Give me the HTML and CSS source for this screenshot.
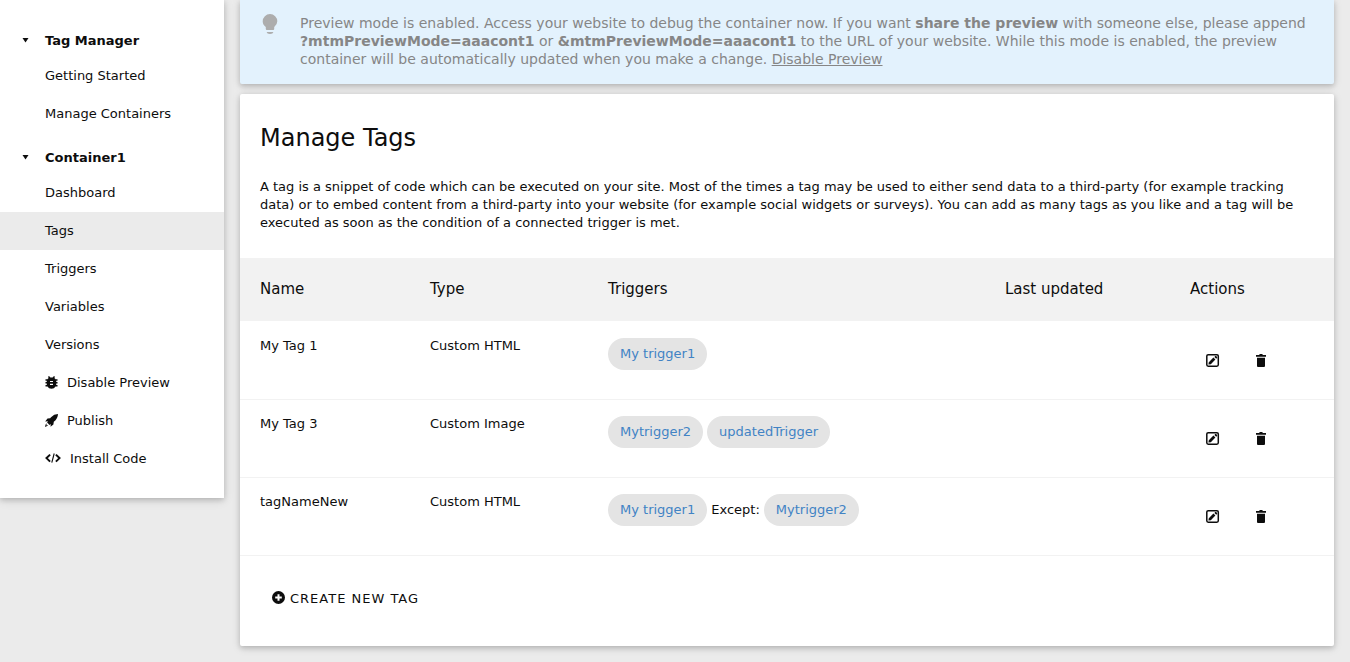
FILE: index.html
```
<!DOCTYPE html>
<html lang="en">
<head>
<meta charset="utf-8">
<title>Manage Tags</title>
<link rel="stylesheet" href="styles.css">
</head>
<body>
<svg class="sprite" aria-hidden="true">
  <symbol id="edit" viewBox="0 0 14 14">
    <rect x=".8" y="1.700" width="11.500" height="11.500" rx="1.400" fill="none" stroke="currentColor" stroke-width="1.500"/>
    <path d="M2.400 11.600l.4-2.400 4.600-4.600 2 2-4.600 4.600zM8.400 3.900l.8-.8q.5-.4 1 0l.8.8q.4.500 0 1l-.8.8z"/>
  </symbol>
  <symbol id="trash" viewBox="0 0 12 14">
    <path d="M0 2h3.200L3.700 1h2.600l.5 1H10v1.700H0zM1 4.700h8V13q0 1-1 1H2q-1 0-1-1z"/>
  </symbol>
</svg>
<div class="page">
  <nav class="sidebar" aria-label="Tag Manager">
    <button class="group" type="button"><svg class="arrow" viewBox="0 0 7 6" aria-hidden="true"><path d="M.5 0h6l-3 4.500z"/></svg>Tag Manager</button>
    <ul class="menu">
      <li><a class="item" href="#">Getting Started</a></li>
      <li><a class="item" href="#">Manage Containers</a></li>
    </ul>
    <button class="group" type="button"><svg class="arrow" viewBox="0 0 7 6" aria-hidden="true"><path d="M.5 0h6l-3 4.500z"/></svg>Container1</button>
    <ul class="menu">
      <li><a class="item" href="#">Dashboard</a></li>
      <li><a class="item active" href="#" aria-current="page">Tags</a></li>
      <li><a class="item" href="#">Triggers</a></li>
      <li><a class="item" href="#">Variables</a></li>
      <li><a class="item" href="#">Versions</a></li>
      <li><a class="item" href="#"><svg class="icon" viewBox="0 0 13 14" aria-hidden="true"><path fill-rule="evenodd" d="M2.900 1.100L4 .1l1.400 1.300h2.200L9 .1l1.100 1-.9.900q.9.500 1.300 1.200h2v1.500h-1.300V6h1.300v1.600h-1.300v1.300h1.300v1.500h-2Q9.300 12.700 6.500 12.700T2.500 10.400h-2V8.900h1.300V7.600H.5V6h1.300V4.700H.5V3.200h2q.4-.7 1.300-1.200zM5 4.900v1.200h3V4.900zM5 7.700v1.200h3V7.700z"/></svg>Disable Preview</a></li>
      <li><a class="item" href="#"><svg class="icon" viewBox="0 0 13 14" aria-hidden="true"><path d="M13 0Q9 .1 6 3.300L5.200 4.300 2.500 4.600.2 7.600l2.800-.4-.9 1.200 2.500 2.500 1.200-.8-.3 2.600 2.900-2.200.4-2.700Q12.800 4.900 13 0zM1.600 9.200Q.4 10.100 0 12.900q2.600-.5 3.400-2.100l-1.900.8z"/></svg>Publish</a></li>
      <li><a class="item" href="#"><svg class="icon wide" viewBox="0 0 16 14" aria-hidden="true"><path d="M5.100 2.600L1.500 6.100l3.600 3.500M10.900 2.600l3.600 3.500-3.600 3.500" fill="none" stroke="currentColor" stroke-width="2"/><path d="M9.200 1.500L6.800 10.700" fill="none" stroke="currentColor" stroke-width="1.100"/></svg>Install Code</a></li>
    </ul>
  </nav>
  <main class="content">
    <div class="notice" role="status">
      <svg class="bulb" viewBox="0 0 16 22" aria-hidden="true"><path d="M8 0a7.300 7.300 0 0 1 7.300 7.300q0 3.500-3.100 5.700v2q0 1-1 1H4.800q-1 0-1-1v-2Q.7 10.800.7 7.300A7.300 7.300 0 0 1 8 0zM4.600 18h6.800l-1 1.600Q9.700 20 8 20t-2.400-.4z"/></svg>
      <p class="notice-text">Preview mode is enabled. Access your website to debug the container now. If you want <strong>share the preview</strong> with someone else, please append <strong>?mtmPreviewMode=aaacont1</strong> or <strong>&amp;mtmPreviewMode=aaacont1</strong> to the URL of your website. While this mode is enabled, the preview container will be automatically updated when you make a change. <a class="notice-link" href="#">Disable Preview</a></p>
    </div>
    <section class="card">
      <h2 class="title">Manage Tags</h2>
      <p class="intro">A tag is a snippet of code which can be executed on your site. Most of the times a tag may be used to either send data to a third-party (for example tracking data) or to embed content from a third-party into your website (for example social widgets or surveys). You can add as many tags as you like and a tag will be executed as soon as the condition of a connected trigger is met.</p>
      <table class="tags">
        <thead>
          <tr><th class="col-name">Name</th><th class="col-type">Type</th><th>Triggers</th><th class="col-updated">Last updated</th><th class="col-actions">Actions</th></tr>
        </thead>
        <tbody>
          <tr>
            <td>My Tag 1</td><td>Custom HTML</td>
            <td><div class="chips"><a class="chip" href="#">My trigger1</a></div></td><td></td>
            <td><div class="actions"><button class="action" type="button" aria-label="Edit My Tag 1"><svg class="edit"><use href="#edit"/></svg></button><button class="action" type="button" aria-label="Delete My Tag 1"><svg class="trash"><use href="#trash"/></svg></button></div></td>
          </tr>
          <tr>
            <td>My Tag 3</td><td>Custom Image</td>
            <td><div class="chips"><a class="chip" href="#">Mytrigger2</a><a class="chip" href="#">updatedTrigger</a></div></td><td></td>
            <td><div class="actions"><button class="action" type="button" aria-label="Edit My Tag 3"><svg class="edit"><use href="#edit"/></svg></button><button class="action" type="button" aria-label="Delete My Tag 3"><svg class="trash"><use href="#trash"/></svg></button></div></td>
          </tr>
          <tr>
            <td>tagNameNew</td><td>Custom HTML</td>
            <td><div class="chips"><a class="chip" href="#">My trigger1</a><span>Except:</span><a class="chip" href="#">Mytrigger2</a></div></td><td></td>
            <td><div class="actions"><button class="action" type="button" aria-label="Edit tagNameNew"><svg class="edit"><use href="#edit"/></svg></button><button class="action" type="button" aria-label="Delete tagNameNew"><svg class="trash"><use href="#trash"/></svg></button></div></td>
          </tr>
        </tbody>
      </table>
      <button class="create" type="button"><svg class="plus" viewBox="0 0 14 16" aria-hidden="true"><path fill-rule="evenodd" d="M6.500 0a6.500 6.500 0 1 1 0 13A6.500 6.500 0 0 1 6.500 0zM5.500 3.200v2.300H3.200v2h2.300v2.300h2V7.500h2.300v-2H7.500V3.200z"/></svg>Create new tag</button>
    </section>
  </main>
</div>
</body>
</html>
```
FILE: styles.css
```
* { box-sizing: border-box; }
body {
  margin: 0;
  background: #ebebeb;
  color: #0d0d0d;
  font: 13px/18px "DejaVu Sans", sans-serif;
}
button { font: inherit; color: inherit; background: none; border: 0; padding: 0; cursor: pointer; }
a { text-decoration: none; color: inherit; }
svg { fill: currentColor; display: block; flex: none; }
.sprite { display: none; }

.page { display: flex; align-items: flex-start; gap: 16px; padding-right: 16px; }

.sidebar, .notice, .card {
  box-shadow: 0 2px 5px rgba(0, 0, 0, .16), 0 2px 10px rgba(0, 0, 0, .12);
}
.sidebar { flex: none; width: 224px; padding: 16px 0 20px; background: #fff; }
.group {
  display: flex;
  align-items: center;
  width: 100%;
  padding: 16px 0 7px 22px;
  gap: 16px;
  font-weight: bold;
}
.arrow { width: 7px; height: 6px; }
.menu { list-style: none; margin: 0; padding: 0; }
.item { display: flex; align-items: center; gap: 9px; padding: 10px 20px 10px 45px; }
.item.active { background: #ebebeb; }
.icon { width: 13px; height: 14px; }
.icon.wide { width: 16px; }

.content { flex: 1; min-width: 0; padding-bottom: 16px; }
.notice {
  display: flex;
  gap: 22px;
  padding: 14px 20px 16px 22px;
  background: #e3f2fd;
  color: #868686;
  border-radius: 0 0 2px 2px;
}
.bulb { width: 16px; height: 22px; color: #adadad; }
.notice-text { margin: 0; font-size: 14px; }
.notice-link { text-decoration: underline; }

.card { margin-top: 10px; padding-bottom: 30px; background: #fff; border-radius: 2px; }
.title { margin: 0; padding: 28px 20px 0; font-size: 24px; line-height: 32px; font-weight: normal; }
.intro { margin: 0; padding: 24px 20px 26px; }

.tags { width: 100%; table-layout: fixed; border-collapse: separate; border-spacing: 0; }
.tags th {
  height: 63px;
  padding: 0 0 2px 20px;
  background: #f2f2f2;
  font-size: 15px;
  font-weight: normal;
  text-align: left;
}
.tags td {
  height: 78px;
  padding: 15px 0 0 20px;
  vertical-align: top;
  border-bottom: 1px solid #f2f2f2;
}
.tags tr:first-child td { height: 79px; padding-top: 16px; }
.col-name { width: 170px; }
.col-type { width: 178px; }
.col-updated { width: 185px; }
.col-actions { width: 164px; }
.chips { display: flex; align-items: center; gap: 4px; padding-top: 1px; }
.chip { padding: 7px 12px; border-radius: 16px; background: #e4e4e4; color: #4183c4; }
.actions { display: flex; gap: 13px; padding: 5px 0 0 5px; }
.action { display: grid; place-items: center; width: 36px; height: 36px; }
.edit { width: 14px; height: 14px; }
.trash { width: 12px; height: 14px; }

.create {
  display: flex;
  align-items: center;
  gap: 4px;
  margin-left: 32px;
  padding: 34px 0 8px;
  letter-spacing: 1px;
  text-transform: uppercase;
}
.plus { width: 14px; height: 16px; }
```
